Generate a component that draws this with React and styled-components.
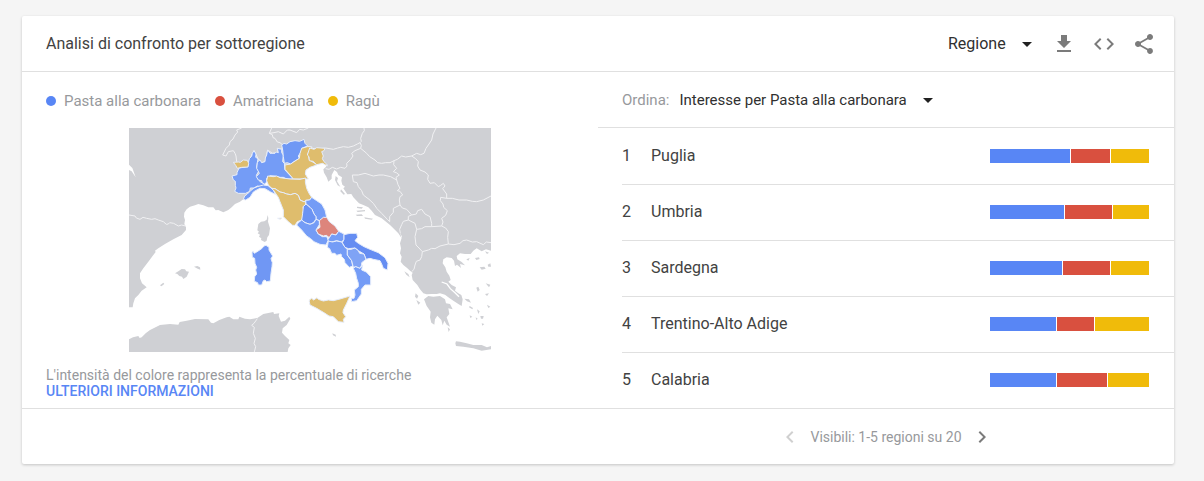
import React from 'react';
import styled, { createGlobalStyle } from 'styled-components';
import {
  MdArrowDropDown,
  MdChevronLeft,
  MdChevronRight,
  MdCode,
  MdGetApp,
  MdShare,
} from 'react-icons/md';

const colors = {
  blue: '#5886f5',
  red: '#d9503f',
  yellow: '#f0bb0a',
  line: '#e0e0e0',
  text: '#424242',
  muted: '#97999c',
  icon: '#7b7b7b',
  land: '#cfd0d4',
  border: '#f1f1f3',
};

const GlobalStyle = createGlobalStyle`
  * {
    box-sizing: border-box;
  }

  body {
    margin: 0;
    background: #f5f5f5;
    color: ${colors.text};
    font-family: Roboto, "Liberation Sans", sans-serif;
    font-size: 16px;
  }
`;

const Page = styled.main`
  padding: 16px 30px 16px 22px;
`;

const Card = styled.section`
  background: #fff;
  border-radius: 2px;
  box-shadow: 0 1px 3px rgba(0, 0, 0, .2);
`;

const Header = styled.header`
  display: flex;
  align-items: center;
  justify-content: space-between;
  height: 56px;
  padding: 0 18px 0 24px;
  border-bottom: 1px solid ${colors.line};
`;

const Title = styled.h2`
  margin: 0;
  font-size: 16px;
  font-weight: 400;
`;

const Toolbar = styled.div`
  display: flex;
  align-items: center;
  gap: 13px;
`;

const Actions = styled.div`
  display: flex;
  gap: 16px;
`;

const IconButton = styled.button`
  display: flex;
  padding: 0;
  border: 0;
  background: none;
  color: ${colors.icon};
  font-size: 24px;
  cursor: pointer;

  &:disabled {
    color: #d0d0d0;
    cursor: default;
  }
`;

/* select and arrow share one grid cell */
const SelectBox = styled.div`
  display: inline-grid;
  align-items: center;
  color: #212121;

  select,
  svg {
    grid-area: 1 / 1;
  }

  svg {
    justify-self: end;
    font-size: 24px;
    pointer-events: none;
  }
`;

const StyledSelect = styled.select`
  appearance: none;
  margin: 0;
  padding: 0 33px 0 0;
  border: 0;
  background: none;
  color: #303030;
  font-family: inherit;
  font-size: ${({ $size }) => $size}px;
  line-height: 24px;
`;

const Columns = styled.div`
  display: grid;
  grid-template-columns: 1fr 1fr;
`;

const MapPanel = styled.div`
  display: flex;
  flex-direction: column;
  padding: 0 24px;
`;

const Legend = styled.ul`
  display: flex;
  align-items: center;
  gap: 14px;
  height: 56px;
  margin: 0;
  padding: 2px 0 0;
  list-style: none;
  color: ${colors.muted};
  font-size: 15px;
`;

const LegendItem = styled.li`
  display: flex;
  align-items: center;
  gap: 8px;

  &::before {
    content: '';
    width: 10px;
    height: 10px;
    border-radius: 50%;
    background: ${({ $color }) => $color};
  }
`;

const StyledMap = styled.svg`
  display: block;
  align-self: center;
  width: 362px;
  max-width: 100%;
`;

const Note = styled.p`
  margin: 15px 0 0;
  color: ${colors.muted};
  font-size: 14px;
  line-height: 16px;
`;

const MoreLink = styled.a`
  display: block;
  width: fit-content;
  color: ${colors.blue};
  font-weight: 500;
  text-decoration: none;
  text-transform: uppercase;
`;

const SortBar = styled.div`
  display: flex;
  align-items: center;
  gap: 10px;
  height: 56px;
  padding-left: 24px;
  border-bottom: 1px solid ${colors.line};
  font-size: 15px;

  label {
    color: ${colors.muted};
  }
`;

const RegionList = styled.ol`
  margin: 0 0 0 24px;
  padding: 0;
  list-style: none;
`;

const RegionRow = styled.li`
  display: flex;
  align-items: flex-start;
  height: 56px;
  padding: 20px 24px 0 0;
  border-top: 1px solid ${colors.line};
  line-height: 14px;

  &:first-child {
    border-top-color: transparent;
  }
`;

const Rank = styled.span`
  width: 29px;
`;

const RegionName = styled.span`
  flex: 1;
`;

const Bar = styled.div`
  display: flex;
  width: 160px;
  height: 14px;
`;

const Segment = styled.span`
  border-right: 1px solid #fff;
  background: ${({ $color }) => $color};
`;

const Footer = styled.footer`
  display: grid;
  grid-template-columns: 1fr 1fr;
  border-top: 1px solid ${colors.line};
`;

const Pager = styled.nav`
  grid-column: 2;
  display: flex;
  align-items: center;
  justify-content: center;
  gap: 8px;
  height: 55px;
  color: ${colors.muted};
  font-size: 14px;
`;

const terms = [
  { name: 'Pasta alla carbonara', color: colors.blue },
  { name: 'Amatriciana', color: colors.red },
  { name: 'Ragù', color: colors.yellow },
];

const regions = [
  { name: 'Puglia', values: [80, 39, 38] },
  { name: 'Umbria', values: [74, 47, 36] },
  { name: 'Sardegna', values: [72, 47, 38] },
  { name: 'Trentino-Alto Adige', values: [66, 37, 54] },
  { name: 'Calabria', values: [66, 50, 41] },
];

const land = [
  // continental Europe
  '0,0 1086,0 1086,368 1071,364 1058,370 1043,361 1033,368 1025,378 1008,378 993,376 983,384 985,394 998,402 1008,412 993,408 996,420 984,410 978,414 975,398 968,390 953,388 943,394 941,406 949,418 953,431 961,443 965,456 958,461 968,471 981,478 978,488 988,496 997,501 1001,514 998,534 988,528 973,518 961,510 948,500 933,496 923,498 908,498 893,499 883,496 873,484 865,471 851,456 848,441 851,434 843,428 835,421 823,411 815,401 818,386 813,376 816,361 813,346 819,326 813,314 818,331 808,316 796,304 783,291 771,281 758,271 738,261 728,248 718,238 703,231 690,226 680,215 673,208 667,198 655,199 643,181 648,176 640,170 637,158 639,148 628,141 624,132 616,126 608,141 608,152 598,161 593,148 585,134 583,124 591,116 595,109 560,100 500,110 400,160 343,214 333,221 318,228 308,238 298,246 283,253 268,246 260,247 253,238 238,238 223,232 208,228 198,232 183,236 173,244 166,254 165,266 168,276 166,288 171,298 171,306 158,321 133,334 108,348 88,361 78,368 80,372 73,381 58,401 43,421 33,436 33,451 39,466 53,478 38,488 28,501 18,511 13,526 11,538 0,538',
  // north Africa
  '0,634 12,628 28,624 32,630 38,628 50,616 63,606 93,591 123,588 148,590 152,582 173,578 198,573 238,574 246,584 253,586 271,576 293,568 301,566 313,574 328,574 331,566 348,572 363,574 385,570 403,558 433,552 435,558 451,556 449,564 456,581 468,578 481,566 484,572 473,591 461,601 459,614 468,624 481,636 478,646 485,651 478,661 476,672 0,672',
  // Peloponnese, Crete
  '885,514 898,504 913,506 933,504 948,514 951,526 963,528 971,544 958,541 961,558 953,568 963,596 953,590 946,578 941,592 937,576 925,563 918,574 916,590 907,584 903,568 905,551 893,534',
  '979,646 981,640 993,641 1013,646 1033,651 1058,651 1074,658 1086,654 1086,664 1058,668 1033,661 1003,656 981,654',
  // Corsica
  '416,261 418,270 417,281 423,301 420,321 415,328 413,338 407,342 396,336 397,331 390,326 393,320 386,316 390,311 385,307 388,288 396,281 406,280 413,275',
  // Balearics
  '138,436 148,430 158,423 168,424 172,430 180,431 173,446 163,453 159,446 151,444 145,438',
  '195,416 205,414 213,418 214,425 206,422',
  '93,472 103,464 106,468 97,475',
  // Aegean
  '1038,390 1050,388 1052,393 1042,396',
  '1012,394 1022,390 1018,398',
  '1052,418 1066,416 1070,422 1058,425',
  '1070,466 1084,470 1080,478',
  '1042,479 1048,476 1052,486 1046,491',
  '1006,512 1020,514 1026,524 1014,520',
  '1022,534 1032,540 1030,544 1020,538',
  '1044,544 1052,550 1048,558',
  '1054,564 1064,564 1062,572 1056,572',
  '1074,530 1084,536 1078,540',
  '1068,498 1080,496 1074,504',
  '1022,562 1030,566 1024,570',
  '1058,586 1066,588 1060,593',
  '1040,568 1046,572 1042,576',
  '1076,410 1084,406 1086,416 1078,416',
  '1068,370 1080,374 1074,378',
  // Ionian
  '826,430 838,438 842,448 832,440',
  '860,496 868,504 864,512 858,506',
  '862,516 874,524 868,530',
  '956,598 963,604 959,612',
  '610,616 620,620 621,626 612,622',
  // Dalmatia
  '620,144 627,150 624,160 634,176 626,172 618,156',
  '636,184 648,198 644,200 634,190',
  '684,236 702,238 698,242 684,240',
  '682,248 708,246 708,250 686,252',
  '680,260 698,259 702,264 684,264',
  '706,268 732,272 728,275 708,272',
];

const borders = [
  '0,261 18,264 22,270 33,274 42,268 53,271 68,274 78,272 88,276 103,281 112,289 118,288 122,284 134,286 148,294 158,291 170,294',
  '338,0 323,6 326,12 318,21 312,33 303,41 301,51 291,61 281,81 291,84 298,71 313,68 318,76 321,84 323,101',
  '358,106 368,81 375,68 387,92 398,104 408,101 416,66 430,76 448,74 445,61 458,64 463,50',
  '428,0 421,16 430,20 432,29 438,31 445,42 453,44 460,50',
  '421,16 435,14 448,11 463,18 475,6 483,6 503,14 512,4 523,6 538,0',
  '538,56 555,62 573,62 590,60 613,64 626,60 643,56 658,58 673,54 685,48 693,44',
  '705,0 706,8 700,16 695,31 697,40 693,44',
  '693,44 697,52 695,61 678,68 668,76 672,84 665,94 653,106 654,114 648,121 635,118 623,123 610,118 600,124 590,122',
  '695,61 713,76 722,86 738,96 746,104 758,106 770,104 783,104 795,98',
  '795,98 805,94 818,84 830,87 848,84',
  '848,84 863,76 875,80 885,76 891,61 900,48 908,36 912,18 921,0',
  '848,84 860,92 868,101 866,114 873,126 888,132 898,141 896,154 903,166 916,164 928,176 935,172 943,166 948,174 941,182 953,198 953,211',
  '953,211 970,211 990,216 1013,216 1030,220 1043,221 1063,216 1086,204',
  '953,211 935,208 934,218 942,228 944,238 955,248 950,262 938,271 942,282 938,294',
  '795,98 794,110 803,121 793,131 802,134 811,141 801,148 803,156',
  '670,141 688,141 708,136 733,144 750,141 763,141 785,146 803,156',
  '670,141 673,161 684,164 688,176 698,188 703,201 720,214 733,226 744,242 758,256 775,274 782,281',
  '803,156 807,170 813,181 805,188 813,190 821,201 813,206 811,216 813,231 793,241 793,253 782,266 782,281',
  '813,231 820,240 833,244 848,261 838,265 838,276 823,280 818,290 812,304 814,316',
  '848,261 862,258 866,248 878,244 888,258 903,266 908,286 908,296 888,296 878,302 863,304 858,286 838,276',
  '908,296 938,294 950,300 958,311 956,328 958,348',
  '880,371 898,366 908,361 918,362 933,354 958,348',
  '863,304 858,326 861,351 870,360 880,371',
  '880,371 878,386 873,396 862,400 858,411 855,424 848,431',
  '958,348 975,350 993,346 1002,338 1013,336 1030,342 1043,341 1063,350 1072,342 1086,344',
  '385,572 375,586 368,592 376,598 373,616 379,631 375,646 380,656 376,672',
];

const italy = [
  ['Piemonte', '#749cf6', '356,116 358,104 361,92 368,85 370,76 375,68 381,78 380,88 387,92 385,104 383,118 389,130 382,142 390,154 392,160 402,166 409,172 395,176 385,174 375,180 364,180 362,190 350,196 328,196 317,190 321,180 319,172 319,160 313,156 309,144 324,140 324,134 330,120'],
  ['Valle d’Aosta', '#dfbd6d', '313,103 328,102 334,103 343,96 355,97 359,106 357,117 338,118 325,121 320,112'],
  ['Lombardia', '#749cf6', '385,104 389,98 393,96 398,104 408,101 409,90 413,81 416,66 423,76 438,76 442,72 448,74 445,61 458,64 458,74 463,81 461,101 466,106 468,126 481,140 494,153 473,153 463,148 453,148 438,144 423,143 413,151 413,161 408,169 400,164 398,158 388,156 382,146 391,136 383,121'],
  ['Trentino-Alto Adige', '#6f98f5', '458,51 465,46 473,48 483,41 498,38 512,40 525,34 528,46 536,54 518,61 517,70 508,84 511,91 495,101 485,108 475,104 466,106 463,86 461,66'],
  ['Veneto', '#dfbd6d', '513,76 518,61 535,56 548,56 537,76 541,96 558,106 563,111 543,118 531,126 529,138 538,153 513,153 493,153 483,141 468,124 468,111 485,108 495,101 511,91'],
  ['Friuli-Venezia Giulia', '#dfbd6d', '542,60 555,64 563,59 588,61 585,68 578,71 583,84 580,92 585,101 593,108 595,114 581,106 563,110 552,100 541,98 540,86 535,81'],
  ['Liguria', '#749cf6', '343,214 347,204 355,198 365,188 375,180 385,176 403,171 418,173 433,186 439,199 425,192 408,182 393,181 383,186 373,192 363,208 350,216'],
  ['Emilia-Romagna', '#dfbd6d', '413,158 416,144 433,146 443,144 453,149 483,153 513,154 530,150 529,162 533,181 540,196 548,208 542,216 530,217 526,222 513,216 508,202 498,196 485,200 473,198 463,194 453,192 438,182 428,181 418,171'],
  ['Toscana', '#dfbd6d', '418,173 428,181 438,182 453,192 463,194 473,198 485,200 498,196 508,202 513,216 526,222 530,217 529,231 522,236 524,248 520,256 525,260 518,276 505,281 498,292 491,292 478,281 463,266 463,246 453,221 448,208 443,201 433,186'],
  ['Elba', '#dfbd6d', '446,271 458,270 454,274'],
  ['Marche', '#749cf6', '530,217 542,216 548,208 563,218 578,228 588,246 593,268 583,271 571,278 561,274 561,266 555,258 549,244 543,238 531,228'],
  ['Umbria', '#6b93f3', '531,228 543,238 549,244 555,258 561,266 561,274 553,284 543,289 528,284 518,276 521,256 523,236'],
  ['Lazio', '#749cf6', '503,291 508,284 518,276 528,284 543,289 555,284 561,274 571,278 571,290 561,306 568,318 580,326 593,326 598,336 591,351 573,349 555,341 545,332 533,324 518,306'],
  ['Abruzzo', '#dd857c', '571,278 583,268 593,268 601,281 618,294 629,310 621,321 608,318 601,329 592,322 583,324 568,318 561,306 573,298'],
  ['Molise', '#749cf6', '629,310 645,318 645,334 638,342 623,338 603,343 596,336 601,329 608,318 621,321'],
  ['Campania', '#749cf6', '598,339 610,342 623,339 638,342 648,358 655,364 655,381 668,398 671,414 661,418 648,404 646,394 638,386 636,378 623,382 618,376 608,376 602,362 595,358'],
  ['Puglia', '#658df2', '645,320 663,316 683,316 686,328 678,338 688,346 705,356 723,364 748,374 768,389 777,406 775,426 763,421 758,408 753,398 733,394 723,391 711,394 705,378 688,368 678,360 658,362 648,358 640,344 645,334'],
  ['Basilicata', '#7fa3f5', '655,364 666,364 678,360 688,368 692,376 705,378 711,394 698,404 698,411 693,421 680,416 673,418 668,398 655,381'],
  ['Calabria', '#749cf6', '673,421 680,416 693,421 701,411 698,426 712,432 725,446 725,471 708,471 697,484 697,498 683,518 668,521 667,511 675,511 678,501 676,486 688,476 688,466 683,451 680,436'],
  ['Sicilia', '#dfbd6d', '541,521 541,516 548,511 554,516 564,509 568,514 583,519 598,516 613,518 633,513 663,504 653,526 643,546 642,554 650,566 643,574 645,583 628,581 613,566 600,564 588,556 575,548 563,541 543,531'],
  ['Sardegna', '#7097f4', '369,374 372,370 376,376 383,372 398,362 405,354 411,352 420,358 420,366 431,384 426,392 430,404 429,416 426,436 424,459 413,461 408,456 403,458 398,471 388,471 386,464 376,460 377,446 383,438 380,426 383,418 378,406 377,391 370,388'],
];

const ItalyMap = () => (
  <StyledMap viewBox="0 0 1086 672" role="img" aria-label="Italia">
    <g fill={colors.land}>
      {land.map((points) => (
        <polygon key={points} points={points} />
      ))}
    </g>
    <g fill="none" stroke={colors.border} strokeWidth="3" strokeLinejoin="round">
      {borders.map((points) => (
        <polyline key={points} points={points} />
      ))}
    </g>
    <g stroke="#e6edfb" strokeWidth="3" strokeLinejoin="round">
      {italy.map(([name, fill, points]) => (
        <polygon key={name} fill={fill} points={points} />
      ))}
    </g>
    {/* Gironde estuary and the Euboean gulf */}
    <path d="M0,110 L10,120 L20,148 L8,130 L0,126 Z" fill="#fff" />
    <path d="M938,462 L954,468 L964,482 L978,494 L990,506" fill="none" stroke="#fff" strokeWidth="4" />
  </StyledMap>
);

const Select = ({ options, size, ...rest }) => (
  <SelectBox>
    <StyledSelect $size={size} {...rest}>
      {options.map((option) => (
        <option key={option}>{option}</option>
      ))}
    </StyledSelect>
    <MdArrowDropDown aria-hidden="true" />
  </SelectBox>
);

const Region = ({ rank, name, values }) => (
  <RegionRow>
    <Rank>{rank}</Rank>
    <RegionName>{name}</RegionName>
    <Bar>
      {values.map((value, i) => (
        <Segment key={terms[i].name} $color={terms[i].color} style={{ flexGrow: value }} />
      ))}
    </Bar>
  </RegionRow>
);

const App = () => (
  <Page>
    <GlobalStyle />
    <Card>
      <Header>
        <Title>Analisi di confronto per sottoregione</Title>
        <Toolbar>
          <Select size={16} aria-label="Risoluzione" options={['Regione', 'Città']} />
          <Actions>
            <IconButton type="button" aria-label="Scarica"><MdGetApp /></IconButton>
            <IconButton type="button" aria-label="Incorpora"><MdCode /></IconButton>
            <IconButton type="button" aria-label="Condividi"><MdShare /></IconButton>
          </Actions>
        </Toolbar>
      </Header>

      <Columns>
        <MapPanel>
          <Legend>
            {terms.map(({ name, color }) => (
              <LegendItem key={name} $color={color}>{name}</LegendItem>
            ))}
          </Legend>
          <ItalyMap />
          <Note>
            L'intensità del colore rappresenta la percentuale di ricerche
            <MoreLink href="#info">Ulteriori informazioni</MoreLink>
          </Note>
        </MapPanel>

        <div>
          <SortBar>
            <label htmlFor="sort">Ordina:</label>
            <Select
              id="sort"
              size={15}
              options={terms.map(({ name }) => `Interesse per ${name}`)}
            />
          </SortBar>
          <RegionList>
            {regions.map((region, i) => (
              <Region key={region.name} rank={i + 1} {...region} />
            ))}
          </RegionList>
        </div>
      </Columns>

      <Footer>
        <Pager aria-label="Pagine">
          <IconButton type="button" aria-label="Precedente" disabled><MdChevronLeft /></IconButton>
          <span>Visibili: 1-5 regioni su 20</span>
          <IconButton type="button" aria-label="Successiva"><MdChevronRight /></IconButton>
        </Pager>
      </Footer>
    </Card>
  </Page>
);

export default App;
